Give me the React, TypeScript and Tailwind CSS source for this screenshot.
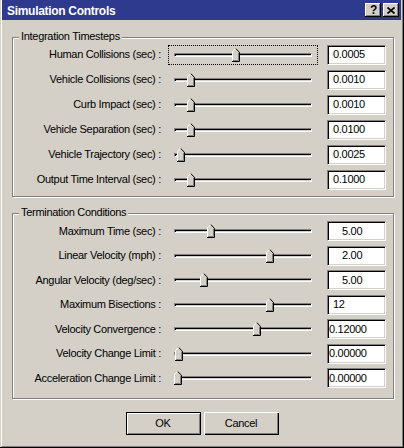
type Row = {
  label: string;
  value: string;
  thumb: number;
  pad: string;
  focused?: boolean;
};

const timesteps: Row[] = [
  { label: "Human Collisions (sec) :", value: "0.0005", thumb: 64, pad: "pl-[4px]", focused: true },
  { label: "Vehicle Collisions (sec) :", value: "0.0010", thumb: 19, pad: "pl-[4px]" },
  { label: "Curb Impact (sec) :", value: "0.0010", thumb: 19, pad: "pl-[4px]" },
  { label: "Vehicle Separation (sec) :", value: "0.0100", thumb: 19, pad: "pl-[4px]" },
  { label: "Vehicle Trajectory (sec) :", value: "0.0025", thumb: 9, pad: "pl-[4px]" },
  { label: "Output Time Interval (sec) :", value: "0.1000", thumb: 19, pad: "pl-[4px]" },
];

const termination: Row[] = [
  { label: "Maximum Time (sec) :", value: "5.00", thumb: 39, pad: "pl-[13px]" },
  { label: "Linear Velocity (mph) :", value: "2.00", thumb: 98, pad: "pl-[13px]" },
  { label: "Angular Velocity (deg/sec) :", value: "5.00", thumb: 32, pad: "pl-[13px]" },
  { label: "Maximum Bisections :", value: "12", thumb: 98, pad: "pl-[4px]" },
  { label: "Velocity Convergence :", value: "0.12000", thumb: 85, pad: "pl-0" },
  { label: "Velocity Change Limit :", value: "0.00000", thumb: 7, pad: "pl-0" },
  { label: "Acceleration Change Limit :", value: "0.00000", thumb: 6, pad: "pl-0" },
];

// trackbar thumb, pointing up
const Thumb = ({ left }: { left: number }) => (
  <svg
    width="8"
    height="14"
    viewBox="0 0 8 14"
    className="absolute top-1/2 -translate-y-1/2"
    style={{ left }}
  >
    <path d="M0 3.5 L3.5 0 L7.5 4 V14 H0 Z" fill="#d4d0c8" />
    <path d="M0.5 13 V3.7 L3.7 0.5" stroke="#fff" fill="none" />
    <path d="M3.7 0.5 L7.5 4.3 V13.5 H0" stroke="#000" fill="none" />
    <path d="M6.5 4.7 V12.5 H1" stroke="#808080" fill="none" />
  </svg>
);

const Slider = ({ thumb, focused }: { thumb: number; focused?: boolean }) => (
  <div
    className={`relative ml-[7px] flex h-[20px] w-[150px] items-center border px-[5px] ${
      focused ? "border-dotted border-black" : "border-transparent"
    }`}
  >
    <div className="h-[4px] w-full border border-t-[#808080] border-l-[#808080] border-b-white border-r-white bg-[#d4d0c8] shadow-[inset_1px_1px_0_#000]" />
    <Thumb left={thumb - 1} />
  </div>
);

const FieldRow = ({ row, height }: { row: Row; height: string }) => (
  <div className={`flex items-center ${height}`}>
    <div className="w-[148px] text-right leading-none">{row.label}</div>
    <Slider thumb={row.thumb} focused={row.focused} />
    <div
      className={`ml-[9px] flex h-[20px] w-[59px] items-center border border-t-[#808080] border-l-[#808080] border-b-white border-r-white bg-white leading-none shadow-[inset_1px_1px_0_#000,inset_-1px_-1px_0_#d4d0c8] ${row.pad}`}
    >
      <span className="pl-px">{row.value}</span>
    </div>
  </div>
);

const GroupBox = ({
  title,
  className,
  children,
}: {
  title: string;
  className: string;
  children: React.ReactNode;
}) => (
  <div
    className={`relative ml-[10px] w-[382px] border border-[#808080] shadow-[1px_1px_0_#fff,inset_1px_1px_0_#fff] ${className}`}
  >
    <span className="absolute -top-[8px] left-[6px] bg-[#d4d0c8] px-[2px] leading-[13px]">
      {title}
    </span>
    {children}
  </div>
);

const CaptionButton = ({ children }: { children: React.ReactNode }) => (
  <div className="flex h-[14px] w-[16px] items-center justify-center bg-[#d4d0c8] shadow-[inset_-1px_-1px_0_#000,inset_1px_1px_0_#fff,inset_-2px_-2px_0_#808080]">
    {children}
  </div>
);

export default function App() {
  return (
    <div
      className="h-[448px] w-[404px] border-r border-b border-black bg-[#d4d0c8] text-[11px] tracking-[-0.3px] text-black"
      style={{ fontFamily: '"Liberation Sans", Arial, sans-serif' }}
    >
      <div className="ml-px h-full border-l border-r border-b border-l-white border-r-[#808080] border-b-[#808080]">
        {/* title bar */}
        <div className="mr-px flex h-[20px] items-center justify-between bg-[#2d3a8e] pl-[5px] pr-[2px]">
          <span className="pt-px text-[12px] font-bold text-white">Simulation Controls</span>
          <div className="flex gap-[2px]">
            <CaptionButton>
              <span className="pl-px text-[12px] font-bold leading-none">?</span>
            </CaptionButton>
            <CaptionButton>
              <svg width="8" height="7" viewBox="0 0 8 7">
                <path d="M0.5 0.5 L7.5 6.5 M7.5 0.5 L0.5 6.5" stroke="#000" strokeWidth="1.7" />
              </svg>
            </CaptionButton>
          </div>
        </div>

        <GroupBox title="Integration Timesteps" className="mt-[17px] h-[160px] pt-[4px]">
          {timesteps.map((r) => (
            <FieldRow key={r.label} row={r} height="h-[25px]" />
          ))}
        </GroupBox>

        <GroupBox title="Termination Conditions" className="mt-[16px] h-[186px] pt-[5px]">
          {termination.map((r) => (
            <FieldRow key={r.label} row={r} height="h-[24.5px]" />
          ))}
        </GroupBox>

        {/* dialog buttons */}
        <div className="mt-[13px] flex justify-center gap-[3px]">
          <div className="h-[23px] w-[75px] border border-black">
            <div className="flex h-full items-center justify-center shadow-[inset_1px_1px_0_#fff,inset_-1px_-1px_0_#808080]">
              OK
            </div>
          </div>
          <div className="flex h-[23px] w-[75px] items-center justify-center shadow-[inset_1px_1px_0_#fff,inset_-1px_-1px_0_#000,inset_-2px_-2px_0_#808080]">
            Cancel
          </div>
        </div>
      </div>
    </div>
  );
}
